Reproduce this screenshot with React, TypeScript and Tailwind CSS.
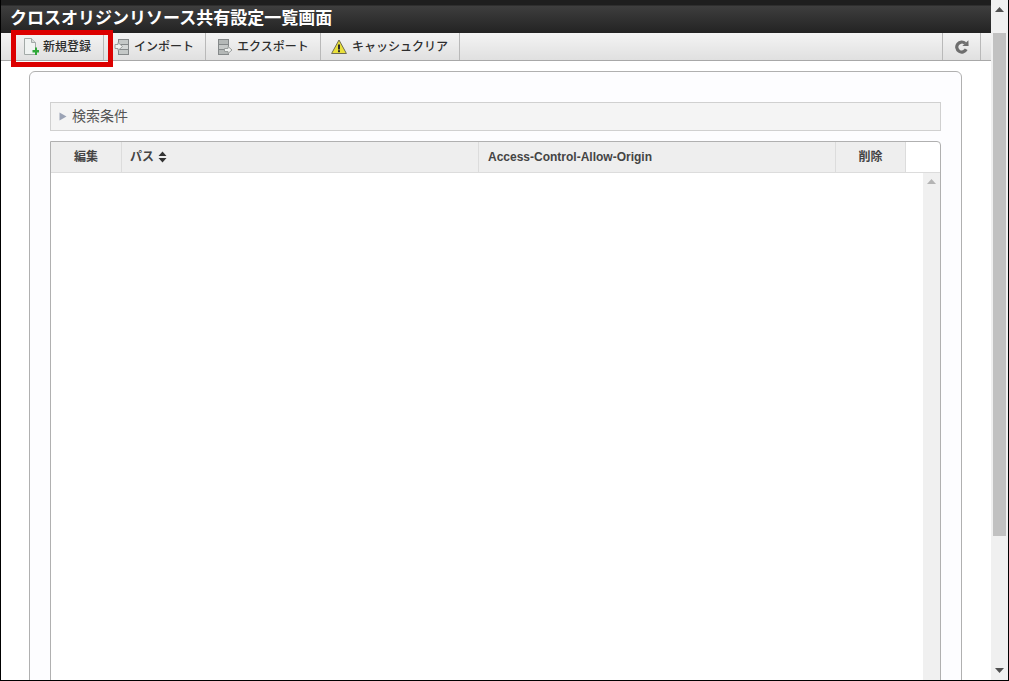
const FONT = "font-['Liberation_Sans','Noto_Sans_CJK_JP',sans-serif]";

function NewIcon() {
  return (
    <svg width="16" height="18" viewBox="0 0 16 18" fill="none">
      <path d="M1.5 0.5 H8.5 L12.5 4.5 V16.5 H1.5 Z" fill="#f0f3f2" stroke="#a3aaa8" />
      <path d="M8.5 0.5 V4.5 H12.5" fill="#d5dad8" stroke="#a3aaa8" />
      <path d="M9.5 12 H12 V9.5 H14 V12 H16 V14.5 H14 V17 H12 V14.5 H9.5 Z" fill="#2fa838" />
    </svg>
  );
}

function ImportIcon() {
  return (
    <svg width="16" height="18" viewBox="0 0 16 18" fill="none">
      <rect x="4.5" y="1.5" width="10" height="5" fill="#c4c8c7" stroke="#85898a" />
      <rect x="4.5" y="6.5" width="10" height="5" fill="#d4d7d6" stroke="#85898a" />
      <rect x="4.5" y="11.5" width="10" height="5" fill="#c4c8c7" stroke="#85898a" />
      <path d="M1 6.5 H4 V4.5 L8.5 8.5 L4 12.5 V10.5 H1 Z" fill="#f0f2f1" stroke="#9a9e9d" />
    </svg>
  );
}

function ExportIcon() {
  return (
    <svg width="16" height="18" viewBox="0 0 16 18" fill="none">
      <rect x="1.5" y="1.5" width="10" height="5" fill="#b4b8b7" stroke="#85898a" />
      <rect x="1.5" y="6.5" width="10" height="5" fill="#c6c9c8" stroke="#85898a" />
      <rect x="1.5" y="11.5" width="10" height="5" fill="#b4b8b7" stroke="#85898a" />
      <path d="M7.5 10.5 H11 V8.5 L15 12 L11 15.5 V13.5 H7.5 Z" fill="#f0f2f1" stroke="#9a9e9d" />
    </svg>
  );
}

function WarnIcon() {
  return (
    <svg width="16" height="16" viewBox="0 0 16 16" fill="none">
      <path d="M8 1 L15.4 14.5 H0.6 Z" fill="#e9e03a" stroke="#6f6c50" strokeLinejoin="round" />
      <rect x="7" y="5.5" width="2" height="5" fill="#2b2b2b" />
      <rect x="7" y="11.2" width="2" height="2" fill="#2b2b2b" />
    </svg>
  );
}

function ReloadIcon() {
  return (
    <svg width="14" height="14" viewBox="0 0 14 14" fill="none">
      <path d="M11.2 9.3 A5 5 0 1 1 10.2 3.4" stroke="#6e6e6e" strokeWidth="3.2" />
      <path d="M7.4 6 L13.6 6 L13.4 0.2 Z" fill="#6e6e6e" />
    </svg>
  );
}

function SortIcon() {
  return (
    <svg width="9" height="12" viewBox="0 0 9 12" className="ml-[4px]">
      <path d="M4.5 0.5 L8.5 5 H0.5 Z M0.5 7 H8.5 L4.5 11.5 Z" fill="#333" />
    </svg>
  );
}

function ToolButton({ icon, label, className }: { icon: React.ReactNode; label: string; className: string }) {
  return (
    <div className={`flex h-full items-center border-r border-[#b9b9b9] ${className}`}>
      <span className="flex w-[20px] shrink-0 items-center">{icon}</span>
      <span className="whitespace-nowrap text-[12px] font-medium text-[#2e2e2e]">{label}</span>
    </div>
  );
}

function HeaderCell({ children, className }: { children: React.ReactNode; className: string }) {
  return (
    <div className={`flex h-full items-center border-r border-[#dcdcdc] bg-[#eeeeee] text-[12px] font-bold text-[#444] ${className}`}>
      {children}
    </div>
  );
}

export default function App() {
  return (
    <div className={`${FONT} relative flex h-[681px] w-[1009px] overflow-hidden border-b border-l border-r border-black bg-white`}>
      <div className="flex min-w-0 flex-1 flex-col">
        {/* Title bar */}
        <div className="h-[33px] shrink-0 bg-[linear-gradient(#1e1e1e_0,#1e1e1e_5px,#3e3e3e_6px,#232323_100%)] pl-[9px] pt-[7px] text-[17px] font-bold leading-[23px] text-white">
          クロスオリジンリソース共有設定一覧画面
        </div>

        {/* Toolbar */}
        <div className="flex h-[28px] shrink-0 items-stretch border-b border-[#a8a8a8] bg-[linear-gradient(#f4f4f4,#e0e0e0)]">
          <div className="w-[13px]" />
          <ToolButton icon={<NewIcon />} label="新規登録" className="w-[90px] pl-[9px]" />
          <ToolButton icon={<ImportIcon />} label="インポート" className="w-[102px] pl-[10px]" />
          <ToolButton icon={<ExportIcon />} label="エクスポート" className="w-[115px] pl-[11px]" />
          <ToolButton icon={<WarnIcon />} label="キャッシュクリア" className="w-[139px] pl-[10px] gap-[1px]" />
          <div className="flex-1 border-r border-[#b9b9b9]" />
          <div className="flex w-[38px] items-center justify-center border-r border-[#b9b9b9]">
            <ReloadIcon />
          </div>
          <div className="w-[10px]" />
        </div>

        {/* Content */}
        <div className="flex-1 overflow-hidden pl-[28px] pr-[29px] pt-[10px]">
          <div className="h-[640px] rounded-[6px] border border-[#b0b0b0] bg-[#fdfdff] px-[20px] pt-[30px]">
            <div className="flex h-[29px] items-center border border-[#d0d0d0] bg-[#f4f4f4] pl-[8px] text-[14px] text-[#555]">
              <svg width="8" height="9" viewBox="0 0 8 9">
                <path d="M0.5 0.5 L7.5 4.5 L0.5 8.5 Z" fill="#9ba3b5" />
              </svg>
              <span className="ml-[5px]">検索条件</span>
            </div>

            <div className="mt-[10px] h-[600px] rounded-tr-[4px] border border-[#b0b0b0] bg-white">
              <div className="flex h-[31px] border-b border-[#dcdcdc]">
                <HeaderCell className="w-[71px] justify-center">編集</HeaderCell>
                <HeaderCell className="w-[357px] pl-[8px]">
                  パス
                  <SortIcon />
                </HeaderCell>
                <HeaderCell className="w-[357px] pl-[9px]">Access-Control-Allow-Origin</HeaderCell>
                <HeaderCell className="w-[70px] justify-center">削除</HeaderCell>
              </div>
              <div className="flex justify-end">
                <div className="h-[520px] w-[17px] bg-[#f0f0f0] pt-[6px]">
                  <svg width="17" height="5" viewBox="0 0 17 5">
                    <path d="M8.5 0 L13 5 H4 Z" fill="#b4b4b4" />
                  </svg>
                </div>
              </div>
            </div>
          </div>
        </div>
      </div>

      {/* Page scrollbar */}
      <div className="flex w-[17px] shrink-0 flex-col bg-[#f0f0f0]">
        <div className="flex h-[33px] shrink-0 justify-center pt-[7px]">
          <svg width="9" height="5" viewBox="0 0 9 5">
            <path d="M4.5 0 L9 5 H0 Z" fill="#505050" />
          </svg>
        </div>
        <div className="mx-[2px] h-[503px] shrink-0 bg-[#c1c1c1]" />
        <div className="flex flex-1 items-end justify-center pb-[7px]">
          <svg width="9" height="5" viewBox="0 0 9 5">
            <path d="M0 0 H9 L4.5 5 Z" fill="#505050" />
          </svg>
        </div>
      </div>

      {/* Red annotation box */}
      <div className="absolute left-[10px] top-[30px] h-[37px] w-[102px] border-[5px] border-[#dc0000]" />
    </div>
  );
}
